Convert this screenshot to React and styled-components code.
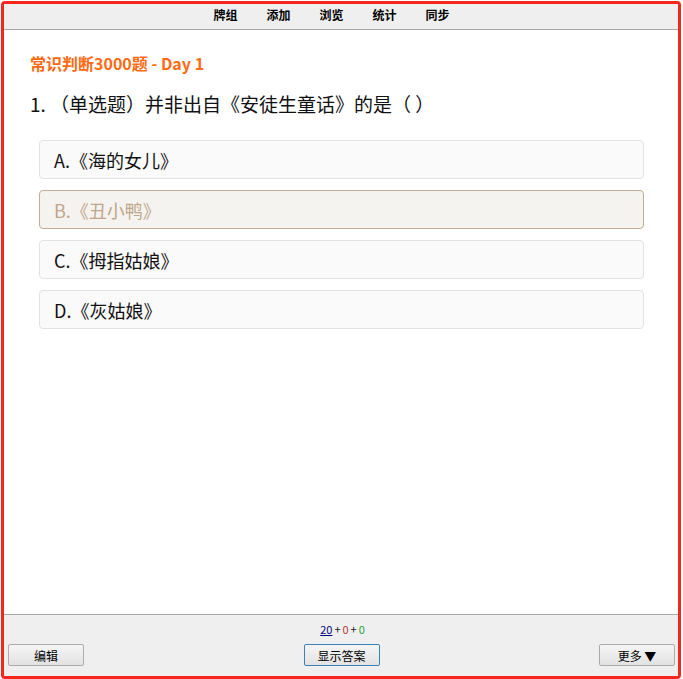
import React from 'react'
import styled, { createGlobalStyle } from 'styled-components'

const Global = createGlobalStyle`
  html, body {
    margin: 0;
    padding: 0;
    background: #fff;
  }
  body {
    font-family: "Noto Sans CJK SC", "Liberation Sans", sans-serif;
  }
`

const Frame = styled.div`
  margin: 1px 0 0 1px;
  width: 680px;
  height: 678px;
  box-sizing: border-box;
  border: 3px solid #f5261e;
  border-radius: 4px;
  display: flex;
  flex-direction: column;
  background: #fff;
  overflow: hidden;
`

const TopBar = styled.nav`
  height: 26px;
  background: #efefef;
  border-bottom: 1px solid #a9a9a9;
  display: flex;
  align-items: center;
  justify-content: center;
  gap: 29px;
  padding: 0 19px 3px 0;
  box-sizing: border-box;
`

const NavLink = styled.a`
  font-size: 12px;
  font-weight: bold;
  color: #000;
  text-decoration: none;
  line-height: 14px;
`

const Content = styled.main`
  flex: 1;
  padding: 21px 34px 0 26px;
`

const Title = styled.div`
  font-size: 16px;
  line-height: 24px;
  font-weight: bold;
  color: #ff6a12;
`

const Question = styled.div`
  margin-top: 15px;
  font-size: 19px;
  line-height: 28px;
  color: #111;
`

const Options = styled.div`
  margin: 22px 0 0 9px;
  display: flex;
  flex-direction: column;
  gap: 11px;
`

const Option = styled.div`
  height: 39px;
  box-sizing: border-box;
  display: flex;
  align-items: center;
  padding-left: 14px;
  font-size: 18px;
  border-radius: 4px;
  border: 1px solid ${p => (p.$picked ? '#c2ab93' : '#e2e2e2')};
  background: ${p => (p.$picked ? '#f5f3ef' : '#fafafa')};
  color: ${p => (p.$picked ? '#bfa68c' : '#111')};
`

const BottomBar = styled.footer`
  background: #efefef;
  border-top: 1px solid #a9a9a9;
  padding: 7px 3px 10px 4px;
`

const Counts = styled.div`
  text-align: center;
  font-size: 11px;
  line-height: 14px;
  padding-left: 2px;
`

const Count = styled.span`
  color: ${p => p.$color};
  text-decoration: ${p => (p.$link ? 'underline' : 'none')};
`

const Plus = styled.span`
  color: #222;
  margin: 0 2px;
`

const ButtonRow = styled.div`
  margin-top: 8px;
  display: grid;
  grid-template-columns: 1fr auto 1fr;
  align-items: center;
`

const Button = styled.button`
  justify-self: ${p => p.$align || 'center'};
  width: 76px;
  height: 22px;
  padding: 0;
  font-family: "Noto Sans CJK SC", "Liberation Sans", sans-serif;
  font-size: 12px;
  color: #000;
  border: 1px solid ${p => (p.$primary ? '#3d80b8' : '#acacac')};
  border-radius: 2px;
  background: linear-gradient(#f5f5f5, #e2e2e2);
`

const options = ['A.《海的女儿》', 'B.《丑小鸭》', 'C.《拇指姑娘》', 'D.《灰姑娘》']

export default function App() {
  return (
    <>
      <Global />
      <Frame>
        <TopBar>
          {['牌组', '添加', '浏览', '统计', '同步'].map(t => (
            <NavLink key={t}>{t}</NavLink>
          ))}
        </TopBar>
        <Content>
          <Title>常识判断3000题 - Day 1</Title>
          <Question>1. （单选题）并非出自《安徒生童话》的是（ ）</Question>
          <Options>
            {options.map((o, i) => (
              <Option key={o} $picked={i === 1}>{o}</Option>
            ))}
          </Options>
        </Content>
        <BottomBar>
          <Counts>
            <Count $color="#000080" $link>20</Count>
            <Plus>+</Plus>
            <Count $color="#c0392b">0</Count>
            <Plus>+</Plus>
            <Count $color="#2e9e3a">0</Count>
          </Counts>
          <ButtonRow>
            <Button $align="start">编辑</Button>
            <Button $primary>显示答案</Button>
            <Button $align="end">更多 ▼</Button>
          </ButtonRow>
        </BottomBar>
      </Frame>
    </>
  )
}
